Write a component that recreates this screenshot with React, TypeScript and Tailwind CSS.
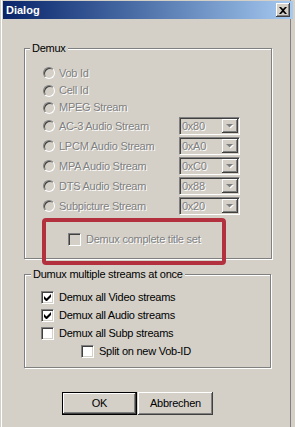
import React from 'react';

// classic win9x bevels
const sunken =
  'border border-t-[#808080] border-l-[#808080] border-b-white border-r-white shadow-[inset_1px_1px_0_#404040,inset_-1px_-1px_0_#d4d0c8]';
const raised =
  'shadow-[inset_-1px_-1px_0_#404040,inset_1px_1px_0_#fff,inset_-2px_-2px_0_#808080]';
const etched = 'border border-[#808080] shadow-[inset_1px_1px_0_#fff,1px_1px_0_#fff]';
const disabledText = 'text-[#808080] [text-shadow:1px_1px_0_#fff]';

const Radio: React.FC = () => (
  <span className="w-[12px] h-[12px] shrink-0 rounded-full border border-t-[#808080] border-l-[#808080] border-b-white border-r-white bg-[#d4d0c8] shadow-[inset_1px_1px_0_#404040]" />
);

const Checkbox: React.FC<{ checked?: boolean; disabled?: boolean }> = ({ checked, disabled }) => (
  <span className={`w-[13px] h-[13px] shrink-0 flex items-center justify-center ${sunken} ${disabled ? 'bg-[#d4d0c8]' : 'bg-white'}`}>
    {checked && (
      <svg width="7" height="7" viewBox="0 0 7 7">
        <path d="M0 2v3l2 2h1l4-4V0L2.5 4.5z" fill="#000" />
      </svg>
    )}
  </span>
);

const Combo: React.FC<{ value: string }> = ({ value }) => (
  <div className={`ml-auto w-[61px] h-[18px] flex items-stretch bg-[#d4d0c8] ${sunken}`}>
    <span className={`flex-1 flex items-center pl-[2px] pt-[1px] ${disabledText}`}>{value}</span>
    <span className={`w-[16px] flex items-center justify-center bg-[#d4d0c8] m-[1px] ${raised}`}>
      <svg width="8" height="5" viewBox="0 0 8 5">
        <path d="M1 1h7L4.5 4.5z" fill="#fff" />
        <path d="M0 0h7L3.5 3.5z" fill="#808080" />
      </svg>
    </span>
  </div>
);

type RadioRow = { label: string; h: string; combo?: string };

const radioRows: RadioRow[] = [
  { label: 'Vob Id', h: 'h-[18px]' },
  { label: 'Cell Id', h: 'h-[17px]' },
  { label: 'MPEG Stream', h: 'h-[17px]' },
  { label: 'AC-3 Audio Stream', h: 'h-[20px]', combo: '0x80' },
  { label: 'LPCM Audio Stream', h: 'h-[20px]', combo: '0xA0' },
  { label: 'MPA Audio Stream', h: 'h-[20px]', combo: '0xC0' },
  { label: 'DTS Audio Stream', h: 'h-[20px]', combo: '0x88' },
  { label: 'Subpicture Stream', h: 'h-[20px]', combo: '0x20' },
];

const App: React.FC = () => {
  return (
    <div className="relative w-[295px] h-[427px] overflow-hidden bg-[#d4d0c8] font-['Liberation_Sans',Arial,sans-serif] text-[11px] leading-[11px] tracking-[-0.25px] text-black shadow-[inset_1px_0_0_#d4d0c8,inset_2px_0_0_#fff,inset_-4px_0_0_#d4d0c8,inset_-5px_0_0_#808080]">
      {/* title bar */}
      <div className="ml-[3px] mr-[2px] mt-[1px] h-[18px] flex items-center justify-between pl-[3px] pr-[3px] bg-linear-to-r from-[#0a246a] to-[#a6caf0]">
        <span className="text-white font-bold text-[11px] tracking-normal">Dialog</span>
        <span className={`w-[14px] h-[14px] flex items-center justify-center bg-[#d4d0c8] ${raised}`}>
          <svg width="8" height="7" viewBox="0 0 8 7">
            <path d="M0 0h2l2 2 2-2h2L5 3.5 8 7H6L4 5 2 7H0l3-3.5z" fill="#000" />
          </svg>
        </span>
      </div>

      {/* Demux group */}
      <div className={`relative mt-[29px] ml-[24px] w-[248px] h-[211px] ${etched}`}>
        <span className="absolute -top-[6px] left-[5px] px-[2px] bg-[#d4d0c8]">Demux</span>
        <div className="pt-[15px] pl-[18px] pr-[31px] flex flex-col">
          {radioRows.map((r) => (
            <div key={r.label} className={`flex items-center gap-[4px] ${r.h}`}>
              <Radio />
              <span className={disabledText}>{r.label}</span>
              {r.combo && <Combo value={r.combo} />}
            </div>
          ))}
        </div>
        <div className="relative mt-[2px] ml-[17px] w-[184px] h-[47px] rounded-[4px] border-[4px] border-[#b3303f] pt-[11px] pl-[22px]">
          <div className="flex items-center gap-[5px] h-[13px]">
            <Checkbox disabled />
            <span className={disabledText}>Demux complete title set</span>
          </div>
        </div>
      </div>

      {/* multiple streams group */}
      <div className={`relative mt-[15px] ml-[24px] w-[247px] h-[94px] ${etched}`}>
        <span className="absolute -top-[6px] left-[6px] px-[2px] bg-[#d4d0c8]">Dumux multiple streams at once</span>
        <div className="pt-[13px] pl-[16px] flex flex-col">
          <div className="flex items-center gap-[5px] h-[18px]">
            <Checkbox checked />
            <span>Demux all Video streams</span>
          </div>
          <div className="flex items-center gap-[5px] h-[18px]">
            <Checkbox checked />
            <span>Demux all Audio streams</span>
          </div>
          <div className="flex items-center gap-[5px] h-[18px]">
            <Checkbox />
            <span>Demux all Subp streams</span>
          </div>
          <div className="flex items-center gap-[5px] h-[19px] pl-[40px]">
            <Checkbox />
            <span>Split on new Vob-ID</span>
          </div>
        </div>
      </div>

      {/* buttons */}
      <div className="mt-[24px] ml-[62px] flex gap-[1px]">
        <button className={`w-[75px] h-[23px] border border-black bg-[#d4d0c8] flex items-center justify-center ${raised}`}>
          OK
        </button>
        <button className={`w-[75px] h-[23px] bg-[#d4d0c8] flex items-center justify-center ${raised}`}>
          Abbrechen
        </button>
      </div>
    </div>
  );
};

export default App;
